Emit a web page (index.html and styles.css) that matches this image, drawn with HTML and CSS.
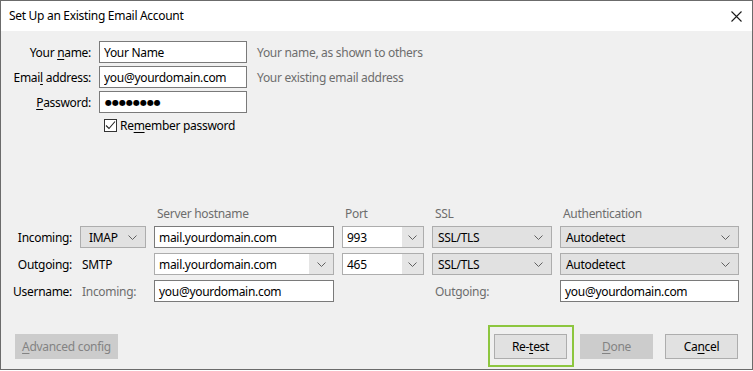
FILE: index.html
```html
<!DOCTYPE html>
<html lang="en">
<head>
    <meta charset="UTF-8">
    <meta name="viewport" content="width=device-width, initial-scale=1.0">
    <title>Set Up an Existing Email Account</title>
    <link rel="stylesheet" href="styles.css">
</head>
<body>
<div class="dialog">
    <div class="titlebar">
        <span class="title">Set Up an Existing Email Account</span>
        <svg class="close" width="11" height="11" viewBox="0 0 11 11">
            <path d="M0.5 0.5 L10.5 10.5 M10.5 0.5 L0.5 10.5" stroke="#1a1a1a" stroke-width="1.1" fill="none"/>
        </svg>
    </div>

    <div class="content">
        <!-- identity -->
        <div class="identity">
            <label class="label">Your <u>n</u>ame:</label>
            <input class="field" type="text" value="Your Name">
            <span class="hint">Your name, as shown to others</span>

            <label class="label">Emai<u>l</u> address:</label>
            <input class="field" type="text" value="you@yourdomain.com">
            <span class="hint">Your existing email address</span>

            <label class="label"><u>P</u>assword:</label>
            <div class="field pass">●●●●●●●●</div>
            <span></span>
        </div>

        <div class="remember">
            <span class="checkbox">
                <svg width="11" height="11" viewBox="0 0 11 11">
                    <path d="M1 5.5 L4 8.5 L10 1.5" stroke="#222" stroke-width="1.1" fill="none"/>
                </svg>
            </span>
            <span>Re<u>m</u>ember password</span>
        </div>

        <!-- server settings -->
        <div class="servers">
            <span></span>
            <span></span>
            <span class="head">Server hostname</span>
            <span class="head">Port</span>
            <span class="head">SSL</span>
            <span class="head">Authentication</span>

            <span class="label">Incoming:</span>
            <div class="select proto">
                <span>IMAP</span>
                <svg width="9" height="5" viewBox="0 0 9 5"><path d="M0.5 0.5 L4.5 4.5 L8.5 0.5" stroke="#606060" fill="none"/></svg>
            </div>
            <div class="box">mail.yourdomain.com</div>
            <div class="combo">
                <span class="combo-text">993</span>
                <span class="combo-btn"><svg width="9" height="5" viewBox="0 0 9 5"><path d="M0.5 0.5 L4.5 4.5 L8.5 0.5" stroke="#606060" fill="none"/></svg></span>
            </div>
            <div class="select">
                <span>SSL/TLS</span>
                <svg width="9" height="5" viewBox="0 0 9 5"><path d="M0.5 0.5 L4.5 4.5 L8.5 0.5" stroke="#606060" fill="none"/></svg>
            </div>
            <div class="select">
                <span>Autodetect</span>
                <svg width="9" height="5" viewBox="0 0 9 5"><path d="M0.5 0.5 L4.5 4.5 L8.5 0.5" stroke="#606060" fill="none"/></svg>
            </div>

            <span class="label">Outgoing:</span>
            <span class="plain">SMTP</span>
            <div class="combo">
                <span class="combo-text">mail.yourdomain.com</span>
                <span class="combo-btn wide"><svg width="9" height="5" viewBox="0 0 9 5"><path d="M0.5 0.5 L4.5 4.5 L8.5 0.5" stroke="#606060" fill="none"/></svg></span>
            </div>
            <div class="combo">
                <span class="combo-text">465</span>
                <span class="combo-btn"><svg width="9" height="5" viewBox="0 0 9 5"><path d="M0.5 0.5 L4.5 4.5 L8.5 0.5" stroke="#606060" fill="none"/></svg></span>
            </div>
            <div class="select">
                <span>SSL/TLS</span>
                <svg width="9" height="5" viewBox="0 0 9 5"><path d="M0.5 0.5 L4.5 4.5 L8.5 0.5" stroke="#606060" fill="none"/></svg>
            </div>
            <div class="select">
                <span>Autodetect</span>
                <svg width="9" height="5" viewBox="0 0 9 5"><path d="M0.5 0.5 L4.5 4.5 L8.5 0.5" stroke="#606060" fill="none"/></svg>
            </div>

            <span class="label">Username:</span>
            <span class="plain muted">Incoming:</span>
            <div class="box">you@yourdomain.com</div>
            <span></span>
            <span class="plain muted indent">Outgoing:</span>
            <div class="box">you@yourdomain.com</div>
        </div>

        <!-- buttons -->
        <div class="buttons">
            <button class="btn disabled"><u>A</u>dvanced config</button>
            <div class="actions">
                <button class="btn focused">Re-<u>t</u>est</button>
                <button class="btn disabled wide-gap"><u>D</u>one</button>
                <button class="btn">Ca<u>n</u>cel</button>
            </div>
        </div>
    </div>
</div>
</body>
</html>
```

FILE: styles.css
```css
/* Windows style dialog */
:root {
    --bg-dialog: #f0f0f0;
    --text-muted: #6d6d6d;
    --field-border: #7a7a7a;
    --ctrl-border: #adadad;
    --ctrl-bg: #e1e1e1;
    --disabled-bg: #cccccc;
    --focus-green: #8dc63f;
}

* {
    box-sizing: border-box;
}

body {
    margin: 0;
    padding: 0;
    background: #ffffff;
    font-family: 'Segoe UI', 'Noto Sans', 'Open Sans', sans-serif;
    font-size: 12px;
    letter-spacing: -0.3px;
    color: #000;
}

u {
    text-decoration: underline;
    text-underline-offset: 2px;
}

.dialog {
    width: 753px;
    height: 370px;
    border: 1px solid #6b6b6b;
    background: var(--bg-dialog);
    display: flex;
    flex-direction: column;
}

.titlebar {
    height: 30px;
    background: #ffffff;
    display: flex;
    align-items: center;
    justify-content: space-between;
    padding: 0 10px 0 8px;
}

.title {
    padding-bottom: 1px;
}

.close {
    display: block;
}

.content {
    padding-top: 10px;
    flex: 1;
}

.identity {
    display: grid;
    grid-template-columns: 90px 148px auto;
    grid-auto-rows: 22px;
    column-gap: 8px;
    row-gap: 3px;
    align-items: center;
}

.label {
    text-align: right;
    white-space: nowrap;
}

.field {
    height: 22px;
    width: 100%;
    margin: 0;
    border: 1px solid var(--field-border);
    background: #fff;
    padding: 0 4px;
    font: inherit;
    letter-spacing: inherit;
    color: #000;
    outline: none;
}

.pass {
    display: flex;
    align-items: center;
    font-family: 'DejaVu Sans', sans-serif;
    font-size: 8px;
    letter-spacing: 0;
    padding-left: 5px;
}

.hint {
    color: var(--text-muted);
    padding-left: 2px;
}

.remember {
    display: flex;
    align-items: center;
    gap: 3px;
    margin: 5px 0 0 103px;
    height: 15px;
}

.checkbox {
    width: 13px;
    height: 13px;
    border: 1px solid #333;
    background: #fff;
    display: flex;
    align-items: center;
    justify-content: center;
}

.servers {
    margin-top: 74px;
    display: grid;
    grid-template-columns: 71px 66px 180px 82px 120px 179px;
    grid-template-rows: 14px 22px 22px 22px;
    column-gap: 8px;
    row-gap: 5px;
    align-items: center;
}

.head {
    color: var(--text-muted);
    padding-left: 3px;
    line-height: 14px;
}

.select {
    height: 22px;
    border: 1px solid var(--ctrl-border);
    background: var(--ctrl-bg);
    display: flex;
    align-items: center;
    justify-content: space-between;
    padding: 0 8px 0 5px;
}

.select.proto {
    padding-left: 8px;
}

.box {
    height: 22px;
    border: 1px solid var(--field-border);
    background: #fff;
    display: flex;
    align-items: center;
    padding: 0 4px;
}

.combo {
    height: 22px;
    border: 1px solid var(--ctrl-border);
    background: #fff;
    display: flex;
}

.combo-text {
    flex: 1;
    display: flex;
    align-items: center;
    padding: 0 4px;
}

.combo-btn {
    width: 21px;
    background: #e5e5e5;
    display: flex;
    align-items: center;
    justify-content: center;
}

.combo-btn.wide {
    width: 24px;
}

.plain {
    padding-left: 2px;
}

.muted {
    color: var(--text-muted);
}

.indent {
    padding-left: 3px;
}

.buttons {
    margin-top: 32px;
    display: flex;
    justify-content: space-between;
    padding: 0 14px 0 14px;
}

.actions {
    display: flex;
    gap: 12px;
}

.btn {
    width: 73px;
    height: 25px;
    border: 1px solid var(--ctrl-border);
    background: var(--ctrl-bg);
    font: inherit;
    letter-spacing: inherit;
    color: #000;
    padding: 0;
    position: relative;
}

.btn.disabled {
    background: var(--disabled-bg);
    border-color: var(--disabled-bg);
    color: #838383;
}

.buttons > .btn {
    width: 103px;
}

.btn.wide-gap {
    margin-left: 1px;
}

/* green focus ring around Re-test */
.btn.focused::after {
    content: '';
    position: absolute;
    top: -10px;
    bottom: -9px;
    left: -7px;
    right: -8px;
    border: 2px solid var(--focus-green);
}
```
